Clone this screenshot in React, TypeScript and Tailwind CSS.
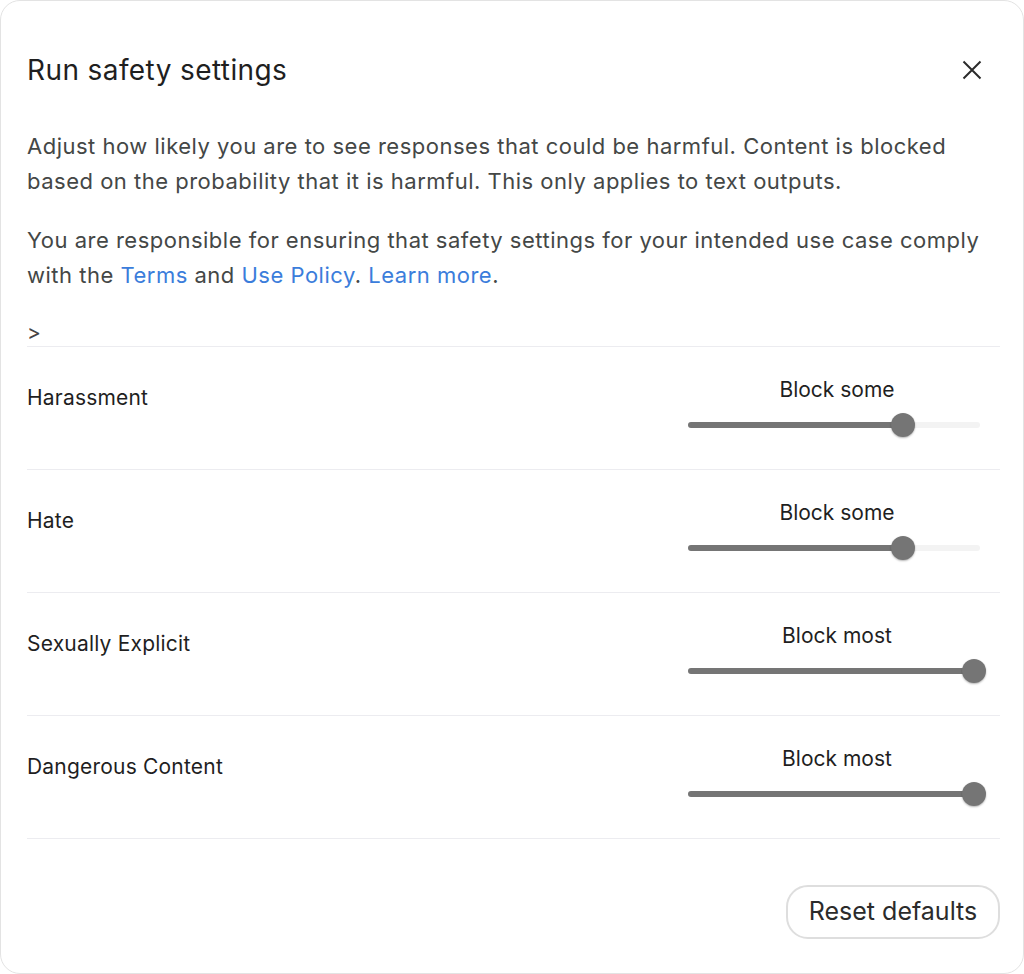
type Setting = { label: string; level: string; value: number };

const settings: Setting[] = [
  { label: "Harassment", level: "Block some", value: 3 },
  { label: "Hate", level: "Block some", value: 3 },
  { label: "Sexually Explicit", level: "Block most", value: 4 },
  { label: "Dangerous Content", level: "Block most", value: 4 },
];

function Slider({ value }: { value: number }) {
  // thumb centre travels 286px across the track, 5 steps (Off .. Block most)
  const pos = (value / 4) * 286;
  return (
    <div className="relative mt-[11px] h-6 w-full">
      <div className="absolute left-0 top-[9px] h-[6px] w-[292px] rounded-full bg-[#f3f3f3]" />
      <div
        className="absolute left-0 top-[9px] h-[6px] rounded-full bg-[#757575]"
        style={{ width: pos }}
      />
      <div
        className="absolute top-0 h-6 w-6 rounded-full bg-[#757575] shadow-[0_1px_2px_rgba(0,0,0,0.3)]"
        style={{ left: pos - 12 }}
      />
    </div>
  );
}

export default function App() {
  return (
    <div className="min-h-[974px] bg-white font-['Inter',sans-serif]">
      <div className="flex h-[974px] flex-col rounded-[20px] border border-[#e3e3e3] pl-[26px] pr-[23px]">
        <div className="flex items-center justify-between pt-[53px]">
          <h1 className="text-[28px] leading-8 tracking-[0.4px] text-[#1f1f1f]">
            Run safety settings
          </h1>
          <button className="mr-[18px] text-[#2b2b2b]">
            <svg width="20" height="20" viewBox="0 0 20 20" fill="none" stroke="currentColor" strokeWidth="2">
              <path d="M1.5 1.5l17 17M18.5 1.5l-17 17" />
            </svg>
          </button>
        </div>

        <p className="mt-[43px] text-[22px] leading-[35px] tracking-[0.5px] text-[#444746]">
          Adjust how likely you are to see responses that could be harmful. Content is blocked
          based on the probability that it is harmful. This only applies to text outputs.
        </p>
        <p className="mt-6 text-[22px] leading-[35px] tracking-[0.5px] text-[#444746]">
          You are responsible for ensuring that safety settings for your intended use case comply
          with the <a className="text-[#3b7ddb]">Terms</a> and{" "}
          <a className="text-[#3b7ddb]">Use Policy</a>.{" "}
          <a className="text-[#3b7ddb]">Learn more</a>.
        </p>

        <div className="mt-[28px] border-b border-[#ececf0] pb-[1px] text-[21px] leading-6 text-[#444]">
          &gt;
        </div>

        <div className="flex flex-col">
          {settings.map((s) => (
            <div
              key={s.label}
              className="flex h-[123px] items-start justify-between border-b border-[#ececf0]"
            >
              <span className="mt-[39px] text-[21px] leading-6 tracking-[0.2px] text-[#1f1f1f]">
                {s.label}
              </span>
              <div className="mr-[14px] mt-[31px] flex w-[298px] flex-col items-center">
                <span className="text-[21px] leading-6 text-[#1f1f1f]">{s.level}</span>
                <Slider value={s.value} />
              </div>
            </div>
          ))}
        </div>

        <div className="mt-[46px] flex justify-end">
          <button className="h-[54px] w-[214px] rounded-[22px] border-2 border-[#dedede] text-[25px] text-[#2b2b2b]">
            Reset defaults
          </button>
        </div>
      </div>
    </div>
  );
}
